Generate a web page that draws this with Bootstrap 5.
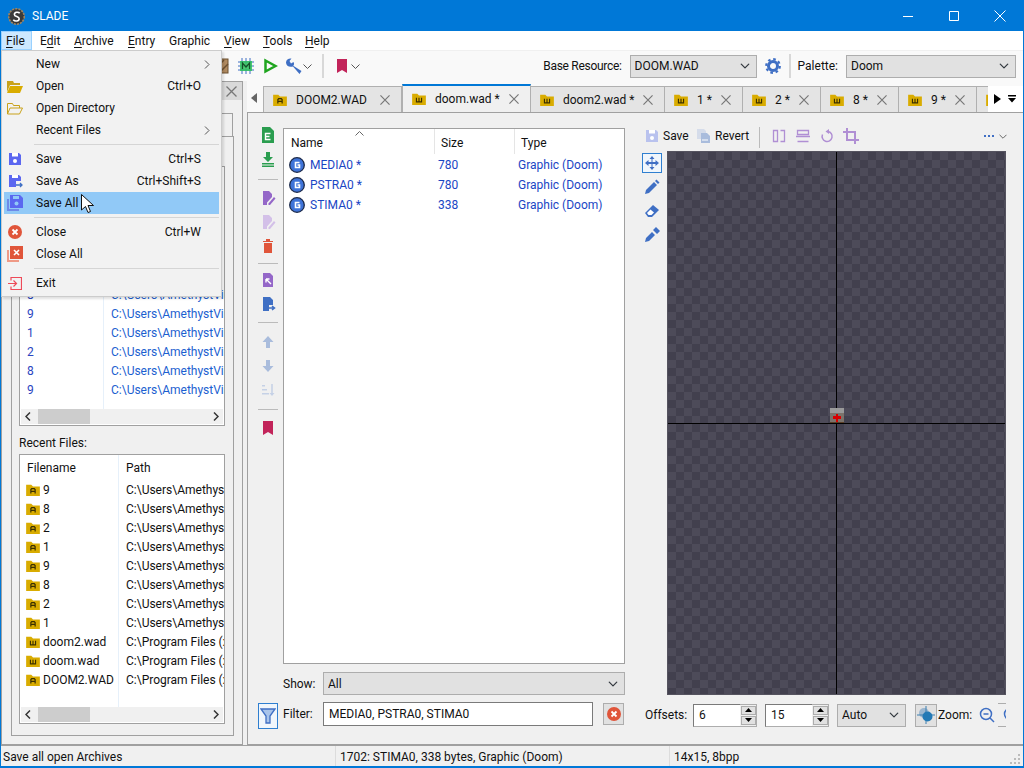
<!DOCTYPE html>
<html lang="en">

<head>
    <meta charset="UTF-8" />
    <meta name="viewport" content="width=device-width, initial-scale=1.0" />
    <title>SLADE</title>

    <link href="https://cdn.jsdelivr.net/npm/bootstrap@5.3.2/dist/css/bootstrap.min.css" rel="stylesheet">

    <style>
        html, body { height: 100%; overflow: hidden; }
        body { font-family: Roboto, "Liberation Sans", sans-serif; font-size: 12px; line-height: 16px; color: #111; background: #f0f0f0; }
        svg { display: block; flex: none; }
        .app-win { width: 1024px; height: 768px; border: 1px solid #0078d7; position: relative; overflow: hidden; }

        /* title + menu */
        .title-bar { height: 30px; background: #0078d7; color: #fff; padding-left: 7px; font-size: 12px; }
        .title-text { margin-left: 7px; }
        .win-btn { width: 46px; height: 30px; display: flex; align-items: center; justify-content: center; }
        .menu-bar { height: 19px; background: #fff; }
        .menu-bar .top-item { padding: 0 5px; line-height: 20px; color: #111; text-decoration: none; flex: none; }
        .menu-bar .top-item.is-open { background: #cce8ff; border: 1px solid #99d1ff; line-height: 18px; width: 31px; margin-right: 3px; padding: 0 4px; }
        .menu-bar .top-item u { text-underline-offset: 2px; }
        .menu-bar .top-item:nth-child(2) { width: 34px; }
        .menu-bar .top-item:nth-child(3) { width: 54px; }
        .menu-bar .top-item:nth-child(4) { width: 41px; }
        .menu-bar .top-item:nth-child(5) { width: 55px; }
        .menu-bar .top-item:nth-child(6) { width: 39px; }
        .menu-bar .top-item:nth-child(7) { width: 42px; }

        /* main toolbar */
        .tool-bar { height: 31px; background: #f9f9f9; border-top: 1px solid #f0f0f0; padding-left: 213px; padding-right: 7px; }
        .tool-sep { width: 2px; height: 24px; background: #d8d8d8; flex: none; }
        .gap-1px { margin-left: 1px; }
        .gap-10 { margin-left: 10px; }
        .base-label { letter-spacing: -.3px; }
        .plain-select { height: 23px; border: 1px solid #adadad; border-radius: 0; background-color: #e1e1e1; font-size: 12px; line-height: 16px; color: #111; padding: 0 3px 0 4px; background-position: right 5px center; background-size: 12px 10px; box-shadow: none; }
        .base-select { width: 127px; }
        .palette-select { width: 170px; }
        .palette-sep { margin-right: 7px; }

        /* left panel */
        .left-col { width: 242px; height: 664px; border: 1px solid #a0a0a0; border-top: 0; flex: none; }
        .dock-head { height: 19px; background: #d9d9d9; padding-right: 5px; border-top: 1px solid #a0a0a0; }
        .dock-tab { height: 23px; margin: 13px 0 0 9px; width: 222px; border: 1px solid #a0a0a0; border-bottom: 0; background: #f0f0f0; }
        .dock-page { margin: 0 9px; width: 223px; height: 600px; border: 1px solid #a0a0a0; padding: 29px 8px 9px 7px; }
        .file-frame { background: #fff; border: 1px solid #a0a0a0; overflow: hidden; position: relative; }
        .file-frame .file-row { height: 19px; display: flex; align-items: center; white-space: nowrap; }
        .file-frame .cell-a { overflow: hidden; flex: none; padding-left: 7px; display: flex; align-items: center; gap: 3px; }
        .file-frame .cell-b { overflow: hidden; flex: none; padding-left: 7px; }
        .frame-top { height: 260px; }
        .frame-top .cell-a { width: 84px; }
        .frame-top .cell-b { width: 120px; }
        .frame-bottom { height: 270px; }
        .frame-bottom .cell-a { width: 99px; padding-left: 6px; }
        .frame-bottom .cell-b { width: 105px; }
        .frame-bottom .list-head .cell-a { padding-left: 7px; }
        .col-rule { position: absolute; top: 0; bottom: 15px; width: 1px; background: #e6f0fa; }
        .rule-top { left: 83px; }
        .rule-bottom { left: 98px; }
        .hidden-rows { height: 118px; }
        .is-mod { color: #1c5fd0; }
        .is-mod .cell-a { color: #2a45c0; }
        .list-head { height: 25px; display: flex; align-items: center; }
        .h-scroll { position: absolute; left: 1px; right: 1px; bottom: 1px; height: 15px; background: #f0f0f0; display: flex; align-items: center; justify-content: space-between; padding: 0 4px; }
        .h-thumb { position: absolute; left: 17px; top: 0; width: 52px; height: 15px; background: #cdcdcd; }
        .recent-label { margin: 9px 0 3px; height: 16px; }

        /* right part */
        .right-col { width: 776px; height: 664px; margin-left: 4px; flex: none; }
        .tab-strip { height: 31px; background: #f9f9f9; padding-left: 16px; position: relative; overflow: hidden; }
        .tab-strip .nav { flex-wrap: nowrap; border: 0; width: 760px; overflow: hidden; align-items: flex-end; height: 31px; }
        .tab-back { position: absolute; left: 4px; top: 12px; }
        .doc-tab { height: 26px; flex: none; background: #e4e4e4; border: 1px solid #b0b0b0; border-bottom: 0; border-left-width: 0; padding-left: 9px; display: flex; align-items: center; color: #111; gap: 9px; text-decoration: none; white-space: nowrap; }
        .doc-tab:first-child { border-left-width: 1px; }
        .doc-tab.is-on { height: 29px; background: #f0f0f0; border-top: 2px solid #0078d7; border-left: 1px solid #b0b0b0; margin-bottom: -1px; padding-top: 1px; padding-bottom: 2px; }
        .doc-tab .x-close { margin-left: auto; margin-right: 11px; }
        .w-137 { width: 139px; } .w-128 { width: 129px; } .w-134 { width: 134px; } .w-78 { width: 78px; } .w-12 { width: 20px; }
        .strip-end { position: absolute; right: 0; top: 5px; bottom: 0; width: 35px; background: #fff; display: flex; align-items: center; padding-left: 6px; gap: 7px; }
        .main-pane { height: 633px; background: #f0f0f0; border: 1px solid #a0a0a0; border-right: 0; padding: 15px 0 0 10px; }
        .entry-col { width: 367px; flex: none; }
        .v-tools { width: 20px; flex: none; margin-top: -1px; }
        .v-tools svg { margin: 0 auto 8px; }
        .v-sep { width: 20px; height: 1px; background: #bbb; }
        .sep-1 { margin: 12px 0 10px; }
        .sep-2 { margin: 9px 0 8px; }
        .sep-3 { margin: 10px 0 11px; }
        .sep-4 { margin: 11px 0 10px; }
        .entry-list { width: 342px; height: 536px; margin-left: 5px; background: #fff; border: 1px solid #a0a0a0; position: relative; }
        .entry-list .list-head { height: 26px; position: relative; padding-top: 2px; }
        .entry-list .ent-row { height: 20px; display: flex; align-items: center; color: #1a46c4; }
        .entry-list .list-head > div { padding-left: 7px; }
        .sort-mark { position: absolute; left: 71px; top: 2px; }
        .ent-a { width: 150px; padding-left: 5px; display: flex; gap: 5px; align-items: center; flex: none; }
        .ent-b { width: 80px; padding-left: 4px; flex: none; }
        .ent-c { padding-left: 4px; flex: none; }
        .head-rule { position: absolute; top: 0; height: 25px; width: 1px; background: #e5e5e5; }
        .rule-size { left: 150px; }
        .rule-type { left: 230px; }
        .form-row-a { height: 23px; margin: 8px 0 0 25px; width: 342px; }
        .form-row-b { height: 27px; margin-top: 7px; }
        .field-label { width: 40px; flex: none; }
        .filter-label { margin-left: 5px; margin-top: 4px; }
        .flat-input { height: 24px; border: 1px solid #7a7a7a; border-radius: 0; font-size: 12px; line-height: 16px; padding: 0 5px; color: #111; box-shadow: none; }
        .filter-input { width: 270px; }
        .icon-btn { border-radius: 0; padding: 0; display: flex; align-items: center; justify-content: center; }
        .is-boxed { border: 1px solid #2f7fd0; background: #f0f6fc; }
        .is-grey { border: 1px solid #adadad; background: #e1e1e1; }
        .funnel-btn { width: 20px; height: 26px; margin-top: 1px; }
        .clear-btn { width: 21px; height: 22px; margin: 1px 0 0 10px; }
        .gfx-col { margin-left: 16px; width: 365px; flex: none; }
        .gfx-bar { height: 23px; padding-left: 3px; }
        .save-label { width: 33px; margin-left: 3px; flex: none; }
        .revert-label { width: 44px; margin-left: 3px; flex: none; }
        .gfx-sep { height: 21px; width: 1px; background: #bbb; margin-top: -1px; flex: none; }
        .after-sep { margin-left: 11px; }
        .more-dots { margin-top: 7px; }
        .more-arrow { margin: 6px -1px 0 5px; }
        .gfx-tools { width: 26px; flex: none; }
        .gfx-tools svg { margin: 0 0 8px 3px; }
        .move-btn { width: 20px; height: 20px; margin: 2px 0 6px 1px; }
        .gfx-tools .move-btn svg { margin: 0; }
        .canvas-box { width: 339px; height: 544px; position: relative; overflow: hidden; border: 1px solid #55535f; background-color: #4d4b59; background-image: conic-gradient(#42404e 25%, transparent 0 50%, #42404e 0 75%, transparent 0); background-size: 16px 16px; }
        .cross-v { position: absolute; left: 168px; top: 0; bottom: 0; width: 1px; background: #000; }
        .cross-h { position: absolute; top: 271px; left: 0; right: 0; height: 1px; background: #000; }
        .the-sprite { position: absolute; left: 162px; top: 256px; }
        .spin-wrap { width: 64px; height: 23px; flex: none; border: 1px solid #adadad; }
        .spin-wrap input { width: 47px; height: 23px; margin: -1px 0 0 -1px; border: 1px solid #7a7a7a; border-right: 0; border-bottom-color: #adadad; padding: 0 5px; font-size: 12px; color: #111; border-radius: 0; }
        .spin-btns { width: 15px; margin-left: 1px; display: flex; flex-direction: column; gap: 1px; padding-top: 1px; }
        .spin-btns span { height: 9px; background: #e1e1e1; border: 1px solid #adadad; display: flex; align-items: center; justify-content: center; }
        .offset-row { height: 24px; margin-top: 8px; width: 365px; overflow: hidden; padding-left: 4px; }
        .offset-label { width: 48px; flex: none; }
        .gap-8 { margin-left: 8px; }
        .auto-select { width: 69px; margin-left: 8px; flex: none; }
        .center-btn { width: 22px; height: 23px; margin-left: 9px; flex: none; }
        .zoom-label { margin-left: 1px; flex: none; }
        .zoom-out { margin-left: 7px; }
        .zoom-clip { margin-left: 3px; width: 9px; height: 24px; border-top: 1px solid #adadad; border-bottom: 1px solid #adadad; overflow: hidden; padding: 3px 0 0 5px; flex: none; }

        /* status bar */
        .status-bar { height: 22px; background: #f0f0f0; border-top: 1px solid #a0a0a0; border-bottom: 1px solid #0078d7; }
        .status-bar > div { height: 20px; line-height: 23px; border-right: 1px solid #dcdcdc; padding-left: 2px; white-space: nowrap; }
        .status-bar .status-cell-a { width: 335px; }
        .status-bar .status-cell-b { width: 334px; padding-left: 4px; }
        .status-bar .status-cell-c { flex: 1; border-right: 0; padding-left: 4px; position: relative; }
        .grip { position: absolute; right: 2px; bottom: 1px; }

        /* file menu */
        .file-menu { position: absolute; left: 0; top: 49px; width: 221px; height: 247px; background: #f2f2f2; border: 1px solid #ccc; border-radius: 0; box-shadow: 2px 2px 2px rgba(0,0,0,.12); padding: 2px 2px 2px; display: block; font-size: 12px; margin: 0; min-width: 0; }
        .file-menu .dropdown-item { height: 22px; padding: 0 18px 0 3px; display: flex; align-items: center; color: #111; font-size: 12px; width: 215px; }
        .file-menu .dropdown-item.active { background: #91c9f7; color: #111; }
        .m-ico { width: 16px; margin-right: 13px; flex: none; display: flex; justify-content: center; }
        .m-key { margin-left: auto; }
        .m-arrow { margin-left: auto; margin-right: -9px; }
        .file-menu .dropdown-divider { margin: 3px 0 3px 30px; height: 1px; border-top: 1px solid #d5d5d5; opacity: 1; }
        .mouse-ptr { position: absolute; left: 80px; top: 193px; z-index: 1001; }
    </style>
</head>

<body>
    <svg width="0" height="0" class="position-absolute">
        <defs>
            <symbol id="i-wad" viewBox="0 0 16 14"><path d="M0 1h6l2 2h8v11H0z" fill="#d9ac00"/><path d="M5 5.500v4.800h6V5.500M8 5.500v4.800" fill="none" stroke="#3b3000" stroke-width="1.300"/></symbol>
            <symbol id="i-arc" viewBox="0 0 16 14"><path d="M0 1h6l2 2h8v11H0z" fill="#d9ac00"/><path d="M5.500 11V6.500l1-1h3l1 1V11M5.500 8.500h5" fill="none" stroke="#3b3000" stroke-width="1.400"/></symbol>
            <symbol id="i-gfx" viewBox="0 0 16 16"><circle cx="8" cy="8" r="7.300" fill="#3f74d8" stroke="#1c2a4a" stroke-width="1.300"/><path d="M10.500 5.500H6.500v5h4V8H8.500" fill="none" stroke="#fff" stroke-width="1.600"/></symbol>
            <symbol id="i-x" viewBox="0 0 11 11"><path d="M.5.500l10 10M10.500.500l-10 10" stroke="#777" stroke-width="1.300"/></symbol>
            <symbol id="i-down" viewBox="0 0 9 5"><path d="M.5.500l4 4 4-4" fill="none" stroke="#555"/></symbol>
            <symbol id="i-save" viewBox="0 0 16 16"><path d="M2 2h10l2 2v10H2z" fill="currentColor"/><path d="M5 2h6v3.500H5z" fill="#fff"/><circle cx="8" cy="10" r="2" fill="#fff"/></symbol>
            <symbol id="i-book" viewBox="0 0 16 16"><path d="M3 1h10v14l-5-3-5 3z" fill="#c2245a"/></symbol>
            <symbol id="i-edit" viewBox="0 0 16 16"><path d="M3 1h6l3 3v3l-5 5.500V15H3z" fill="currentColor"/><path d="M8.500 13.500l5.500-6.500 1.500 1.500-5.500 6.500H8.500z" fill="currentColor"/></symbol>
            <symbol id="i-scroll-l" viewBox="0 0 6 9"><path d="M5 .5l-4 4 4 4" fill="none" stroke="#333" stroke-width="1.500"/></symbol>
            <symbol id="i-scroll-r" viewBox="0 0 6 9"><path d="M1 .5l4 4-4 4" fill="none" stroke="#333" stroke-width="1.500"/></symbol>
            <symbol id="i-spin-up" viewBox="0 0 7 4"><path d="M3.500 0L7 4H0z" fill="#000"/></symbol>
            <symbol id="i-spin-dn" viewBox="0 0 7 4"><path d="M0 0h7L3.500 4z" fill="#000"/></symbol>
        </defs>
    </svg>

    <div class="app-win">

        <!-- title -->
        <div class="title-bar d-flex align-items-center">
            <svg width="17" height="17" viewBox="0 0 16 16"><circle cx="8" cy="8" r="7.300" fill="#3a3a3a" stroke="#a08560" stroke-width="1.500" stroke-dasharray="2 1"/><path d="M11 5C10 3.500 6 3.500 6 6c0 2.500 4.500 1.500 4.500 4S6.500 13 5 11" fill="none" stroke="#fff" stroke-width="1.500"/></svg>
            <span class="title-text">SLADE</span>
            <div class="win-btn ms-auto"><svg width="10" height="1"><path d="M0 .5h10" stroke="#fff"/></svg></div>
            <div class="win-btn"><svg width="10" height="10"><path d="M.5.500h9v9h-9z" fill="none" stroke="#fff"/></svg></div>
            <div class="win-btn"><svg width="12" height="12"><path d="M.5.500l11 11M11.500.500l-11 11" stroke="#fff"/></svg></div>
        </div>

        <!-- menu -->
        <div class="menu-bar d-flex">
            <a class="top-item is-open" href="#"><u>F</u>ile</a>
            <a class="top-item" href="#">E<u>d</u>it</a>
            <a class="top-item" href="#"><u>A</u>rchive</a>
            <a class="top-item" href="#"><u>E</u>ntry</a>
            <a class="top-item" href="#">Graphic</a>
            <a class="top-item" href="#"><u>V</u>iew</a>
            <a class="top-item" href="#"><u>T</u>ools</a>
            <a class="top-item" href="#"><u>H</u>elp</a>
        </div>

        <!-- toolbar -->
        <div class="tool-bar d-flex align-items-center">
            <svg width="16" height="16" viewBox="0 0 16 16"><rect x="2" y="1" width="12" height="14" fill="#b08a60" stroke="#6d5030"/><path d="M3 9l7-7M6 14l8-8" stroke="#6d5030" stroke-width="1.500"/></svg>
            <svg class="ms-2" width="16" height="16" viewBox="0 0 16 16"><path d="M0 4h16M0 8h16M0 12h16M4 0v16M8 0v16M12 0v16" stroke="#3f6fc4"/><rect x="2" y="3" width="12" height="10" fill="#2fc35a" opacity=".85"/><path d="M4.500 11V5L8 9l3.500-4v6" fill="none" stroke="#174f28" stroke-width="1.200"/></svg>
            <svg class="ms-2" width="16" height="16" viewBox="0 0 16 16"><path d="M3.500 2.500v11l10-5.500z" fill="none" stroke="#1fa51f" stroke-width="2.500"/></svg>
            <svg class="ms-2" width="16" height="16" viewBox="0 0 16 16"><path d="M0 4.500C0 1.500 3 0 5.500.500L3.500 3 5 5.500l2.500-1.500C8.500 6 8 7 7.200 7.800L15.500 13l-2 3-6.500-7.500C3.500 9.500 0 8 0 4.500z" fill="#3f6fc4"/></svg>
            <svg class="gap-1px" width="9" height="5"><use href="#i-down"/></svg>
            <div class="tool-sep gap-10"></div>
            <svg class="gap-10" width="16" height="16"><use href="#i-book"/></svg>
            <svg class="gap-1px" width="9" height="5"><use href="#i-down"/></svg>

            <span class="ms-auto me-2 base-label">Base Resource:</span>
            <select class="form-select plain-select base-select"><option>DOOM.WAD</option></select>
            <svg class="mx-2" width="16" height="16" viewBox="0 0 16 16"><circle cx="8" cy="8" r="4.500" fill="none" stroke="#3f6fc4" stroke-width="3"/><circle cx="8" cy="8" r="6.800" fill="none" stroke="#3f6fc4" stroke-width="2.200" stroke-dasharray="2.600 2.740"/></svg>
            <div class="tool-sep palette-sep"></div>
            <span class="me-2">Palette:</span>
            <select class="form-select plain-select palette-select"><option>Doom</option></select>
        </div>

        <div class="d-flex">
            <!-- left panel -->
            <div class="left-col">
                <div class="dock-head d-flex align-items-center justify-content-end"><svg width="11" height="11"><use href="#i-x"/></svg></div>
                <div class="dock-tab"></div>
                <div class="dock-page">
                    <div class="file-frame frame-top">
                        <div class="col-rule rule-top"></div>
                        <div class="hidden-rows"></div>
                        <div class="file-row is-mod"><div class="cell-a">8</div><div class="cell-b">C:\Users\AmethystViper</div></div>
                        <div class="file-row is-mod"><div class="cell-a">9</div><div class="cell-b">C:\Users\AmethystViper</div></div>
                        <div class="file-row is-mod"><div class="cell-a">1</div><div class="cell-b">C:\Users\AmethystViper</div></div>
                        <div class="file-row is-mod"><div class="cell-a">2</div><div class="cell-b">C:\Users\AmethystViper</div></div>
                        <div class="file-row is-mod"><div class="cell-a">8</div><div class="cell-b">C:\Users\AmethystViper</div></div>
                        <div class="file-row is-mod"><div class="cell-a">9</div><div class="cell-b">C:\Users\AmethystViper</div></div>
                        <div class="h-scroll">
                            <svg width="6" height="9"><use href="#i-scroll-l"/></svg>
                            <div class="h-thumb"></div>
                            <svg width="6" height="9"><use href="#i-scroll-r"/></svg>
                        </div>
                    </div>
                    <div class="recent-label">Recent Files:</div>
                    <div class="file-frame frame-bottom">
                        <div class="col-rule rule-bottom"></div>
                        <div class="list-head"><div class="cell-a">Filename</div><div class="cell-b">Path</div></div>
                        <div class="file-row"><div class="cell-a"><svg width="14" height="12"><use href="#i-arc"/></svg>9</div><div class="cell-b">C:\Users\AmethystViper</div></div>
                        <div class="file-row"><div class="cell-a"><svg width="14" height="12"><use href="#i-arc"/></svg>8</div><div class="cell-b">C:\Users\AmethystViper</div></div>
                        <div class="file-row"><div class="cell-a"><svg width="14" height="12"><use href="#i-arc"/></svg>2</div><div class="cell-b">C:\Users\AmethystViper</div></div>
                        <div class="file-row"><div class="cell-a"><svg width="14" height="12"><use href="#i-arc"/></svg>1</div><div class="cell-b">C:\Users\AmethystViper</div></div>
                        <div class="file-row"><div class="cell-a"><svg width="14" height="12"><use href="#i-arc"/></svg>9</div><div class="cell-b">C:\Users\AmethystViper</div></div>
                        <div class="file-row"><div class="cell-a"><svg width="14" height="12"><use href="#i-arc"/></svg>8</div><div class="cell-b">C:\Users\AmethystViper</div></div>
                        <div class="file-row"><div class="cell-a"><svg width="14" height="12"><use href="#i-arc"/></svg>2</div><div class="cell-b">C:\Users\AmethystViper</div></div>
                        <div class="file-row"><div class="cell-a"><svg width="14" height="12"><use href="#i-arc"/></svg>1</div><div class="cell-b">C:\Users\AmethystViper</div></div>
                        <div class="file-row"><div class="cell-a"><svg width="14" height="12"><use href="#i-wad"/></svg>doom2.wad</div><div class="cell-b">C:\Program Files (x86)</div></div>
                        <div class="file-row"><div class="cell-a"><svg width="14" height="12"><use href="#i-wad"/></svg>doom.wad</div><div class="cell-b">C:\Program Files (x86)</div></div>
                        <div class="file-row"><div class="cell-a"><svg width="14" height="12"><use href="#i-arc"/></svg>DOOM2.WAD</div><div class="cell-b">C:\Program Files (x86)</div></div>
                        <div class="h-scroll">
                            <svg width="6" height="9"><use href="#i-scroll-l"/></svg>
                            <div class="h-thumb"></div>
                            <svg width="6" height="9"><use href="#i-scroll-r"/></svg>
                        </div>
                    </div>
                </div>
            </div>

            <!-- right -->
            <div class="right-col">
                <div class="tab-strip">
                    <svg class="tab-back" width="6" height="10" viewBox="0 0 6 10"><path d="M6 0v10L0 5z" fill="#666"/></svg>
                    <nav class="nav nav-tabs">
                        <a class="doc-tab w-137" href="#"><svg width="14" height="12"><use href="#i-arc"/></svg>DOOM2.WAD<svg class="x-close" width="10" height="10"><use href="#i-x"/></svg></a>
                        <a class="doc-tab is-on w-128" href="#"><svg width="14" height="12"><use href="#i-wad"/></svg>doom.wad *<svg class="x-close" width="10" height="10"><use href="#i-x"/></svg></a>
                        <a class="doc-tab w-134" href="#"><svg width="14" height="12"><use href="#i-wad"/></svg>doom2.wad *<svg class="x-close" width="10" height="10"><use href="#i-x"/></svg></a>
                        <a class="doc-tab w-78" href="#"><svg width="14" height="12"><use href="#i-wad"/></svg>1 *<svg class="x-close" width="10" height="10"><use href="#i-x"/></svg></a>
                        <a class="doc-tab w-78" href="#"><svg width="14" height="12"><use href="#i-wad"/></svg>2 *<svg class="x-close" width="10" height="10"><use href="#i-x"/></svg></a>
                        <a class="doc-tab w-78" href="#"><svg width="14" height="12"><use href="#i-wad"/></svg>8 *<svg class="x-close" width="10" height="10"><use href="#i-x"/></svg></a>
                        <a class="doc-tab w-78" href="#"><svg width="14" height="12"><use href="#i-wad"/></svg>9 *<svg class="x-close" width="10" height="10"><use href="#i-x"/></svg></a>
                        <a class="doc-tab w-12" href="#"><svg width="14" height="12"><use href="#i-wad"/></svg></a>
                    </nav>
                    <div class="strip-end">
                        <svg width="7" height="10" viewBox="0 0 7 10"><path d="M0 0v10l7-5z" fill="#000"/></svg>
                        <svg width="8" height="8" viewBox="0 0 8 8"><path d="M0 0h8v1.500H0zM0 3h8L4 7.500z" fill="#000"/></svg>
                    </div>
                </div>

                <div class="main-pane d-flex">
                    <!-- entry list column -->
                    <div class="entry-col">
                        <div class="d-flex">
                            <div class="v-tools">
                                <svg width="16" height="16" viewBox="0 0 16 16"><path d="M2 0h8l4 4v12H2z" fill="#2a9d4f"/><path d="M10.500 6.500h-5v6h5M5.500 9.500h4" fill="none" stroke="#fff" stroke-width="1.400"/></svg>
                                <svg width="16" height="16" viewBox="0 0 16 16"><path d="M6 1h4v5h3l-5 5-5-5h3zM2 12h12v1.500H2zM2 14.500h12V16H2z" fill="#2a9d4f"/></svg>
                                <div class="v-sep sep-1"></div>
                                <svg width="16" height="16" style="color:#9467c8"><use href="#i-edit"/></svg>
                                <svg width="16" height="16" style="color:#d3c0e8"><use href="#i-edit"/></svg>
                                <svg width="16" height="16" viewBox="0 0 16 16"><path d="M3 3h10v1H3zM6 1h4v2H6zM4 5h8v10H4z" fill="#e0553a"/></svg>
                                <div class="v-sep sep-2"></div>
                                <svg width="16" height="16" viewBox="0 0 16 16"><path d="M3 1h7l3 3v11H3z" fill="#9467c8"/><path d="M6 7l5 5M6 7v3.500M6 7h3.500" stroke="#fff" stroke-width="1.400" fill="none"/></svg>
                                <svg width="16" height="16" viewBox="0 0 16 16"><path d="M3 1h7l3 3v5H9v6H3z" fill="#3f6fc4"/><path d="M9 12h5M12 10l2.500 2-2.500 2" stroke="#3f6fc4" stroke-width="1.500" fill="none"/></svg>
                                <div class="v-sep sep-3"></div>
                                <svg width="16" height="16" viewBox="0 0 16 16"><path d="M8 2l5.500 6H10v6H6V8H2.500z" fill="#a9bcdc"/></svg>
                                <svg width="16" height="16" viewBox="0 0 16 16"><path d="M8 14L2.500 8H6V2h4v6h3.500z" fill="#a9bcdc"/></svg>
                                <svg width="16" height="16" viewBox="0 0 16 16"><path d="M2 3h3v1.500H2zM2 7h5v1.500H2zM2 11h7v1.500H2zM9.500 11l2.500 3 2.500-3z" fill="#c5d1e6"/><path d="M12 2v11" stroke="#c5d1e6" stroke-width="1.500"/></svg>
                                <div class="v-sep sep-4"></div>
                                <svg width="16" height="16"><use href="#i-book"/></svg>
                            </div>
                            <div class="entry-list">
                                <svg class="sort-mark" width="9" height="5" viewBox="0 0 9 5"><path d="M.5 4.500l4-4 4 4" fill="none" stroke="#666"/></svg>
                                <div class="head-rule rule-size"></div>
                                <div class="head-rule rule-type"></div>
                                <div class="list-head"><div class="ent-a">Name</div><div class="ent-b">Size</div><div class="ent-c">Type</div></div>
                                <div class="ent-row"><div class="ent-a"><svg width="16" height="16"><use href="#i-gfx"/></svg>MEDIA0 *</div><div class="ent-b">780</div><div class="ent-c">Graphic (Doom)</div></div>
                                <div class="ent-row"><div class="ent-a"><svg width="16" height="16"><use href="#i-gfx"/></svg>PSTRA0 *</div><div class="ent-b">780</div><div class="ent-c">Graphic (Doom)</div></div>
                                <div class="ent-row"><div class="ent-a"><svg width="16" height="16"><use href="#i-gfx"/></svg>STIMA0 *</div><div class="ent-b">338</div><div class="ent-c">Graphic (Doom)</div></div>
                            </div>
                        </div>
                        <div class="form-row-a d-flex align-items-center">
                            <div class="field-label">Show:</div>
                            <select class="form-select plain-select flex-fill"><option>All</option></select>
                        </div>
                        <div class="form-row-b d-flex align-items-start">
                            <div class="icon-btn is-boxed funnel-btn">
                                <svg width="16" height="16" viewBox="0 0 16 16"><path d="M1 1h14L10 8v7H6V8z" fill="#a9c4ea" stroke="#3f6fc4" stroke-width="1.300"/></svg>
                            </div>
                            <div class="field-label filter-label">Filter:</div>
                            <input class="form-control flat-input filter-input" value="MEDIA0, PSTRA0, STIMA0">
                            <div class="icon-btn is-grey clear-btn">
                                <svg width="14" height="14" viewBox="0 0 14 14"><circle cx="7" cy="7" r="7" fill="#e0553a"/><path d="M4.500 4.500l5 5M9.500 4.500l-5 5" stroke="#fff" stroke-width="1.800"/></svg>
                            </div>
                        </div>
                    </div>

                    <!-- graphic column -->
                    <div class="gfx-col">
                        <div class="gfx-bar d-flex align-items-start">
                            <svg width="16" height="16" style="color:#b9c2ee"><use href="#i-save"/></svg>
                            <span class="save-label">Save</span>
                            <svg width="16" height="16" viewBox="0 0 16 16"><path d="M1 1h7l2 2v8H1z" fill="#d5dcea"/><path d="M5 5h6l3 3v7H5z" fill="#a9bcdc"/><path d="M6 12h6" stroke="#fff"/></svg>
                            <span class="revert-label">Revert</span>
                            <div class="gfx-sep"></div>
                            <svg class="after-sep" width="16" height="16" viewBox="0 0 16 16"><path d="M2.500 2.500h4v11h-4zM9.500 2.500h4v11h-4" fill="none" stroke="#b08fd4" stroke-width="1.300"/></svg>
                            <svg class="ms-2" width="16" height="16" viewBox="0 0 16 16"><path d="M2.500 2.500h11v4h-11zM2.500 13.500h11M1 8.500h14" fill="none" stroke="#b08fd4" stroke-width="1.300"/></svg>
                            <svg class="ms-2" width="16" height="16" viewBox="0 0 16 16"><path d="M9 3.500a5 5 0 1 1-5.500 3" fill="none" stroke="#b08fd4" stroke-width="1.500"/><path d="M10 1v5L6.500 3.500z" fill="#b08fd4"/></svg>
                            <svg class="ms-2" width="16" height="16" viewBox="0 0 16 16"><path d="M4 0v12h12M0 4h12v12" fill="none" stroke="#b08fd4" stroke-width="2"/></svg>
                            <svg class="ms-auto more-dots" width="10" height="2"><path d="M0 0h2v2H0zM4 0h2v2H4zM8 0h2v2H8z" fill="#3f6fc4"/></svg>
                            <svg class="more-arrow" width="8" height="5" viewBox="0 0 9 5"><use href="#i-down"/></svg>
                        </div>
                        <div class="d-flex">
                            <div class="gfx-tools">
                                <div class="icon-btn is-boxed move-btn">
                                    <svg width="14" height="14" viewBox="0 0 14 14"><path d="M7 0l2.500 3h-2v3h3V4L14 7l-3.500 3V8h-3v3h2L7 14l-2.500-3h2V8h-3v2L0 7l3.500-3v2h3V3h-2z" fill="#3f6fc4"/></svg>
                                </div>
                                <svg width="16" height="16" viewBox="0 0 16 16"><path d="M2 11l8-8 3 3-8 8-4 1zM11 2l1.500-1.500 3 3L14 5z" fill="#3f6fc4"/></svg>
                                <svg width="16" height="16" viewBox="0 0 16 16"><path d="M1 10l8-8 6 5-7 7H4z" fill="#3f6fc4"/><path d="M3 10l3.500-3.500 3.500 3L7.500 12H4.500z" fill="#fff"/></svg>
                                <svg width="16" height="16" viewBox="0 0 16 16"><path d="M1 15l1-4 6-6 3 3-6 6zM9 3l3-3 4 4-3 3z" fill="#3f6fc4"/></svg>
                            </div>
                            <div class="canvas-box">
                                <div class="cross-v"></div>
                                <div class="cross-h"></div>
                                <svg class="the-sprite" width="14" height="15" viewBox="0 0 14 15"><rect width="14" height="15" fill="#7b736b"/><rect width="14" height="5" fill="#9a9a9a"/><rect x="6" y="6" width="2" height="8" fill="#d80000"/><rect x="3" y="8" width="8" height="3" fill="#d80000"/><rect y="14" width="14" height="1" fill="#5b3f27"/></svg>
                            </div>
                        </div>
                        <div class="offset-row d-flex align-items-center">
                            <span class="offset-label">Offsets:</span>
                            <div class="spin-wrap d-flex"><input class="form-control" value="6"><div class="spin-btns"><span><svg width="7" height="4"><use href="#i-spin-up"/></svg></span><span><svg width="7" height="4"><use href="#i-spin-dn"/></svg></span></div></div>
                            <div class="spin-wrap d-flex gap-8"><input class="form-control" value="15"><div class="spin-btns"><span><svg width="7" height="4"><use href="#i-spin-up"/></svg></span><span><svg width="7" height="4"><use href="#i-spin-dn"/></svg></span></div></div>
                            <select class="form-select plain-select auto-select"><option>Auto</option></select>
                            <div class="icon-btn is-grey center-btn">
                                <svg width="18" height="18" viewBox="0 0 18 18"><circle cx="7" cy="7" r="5" fill="#9bb6cf"/><path d="M9 0v18M0 9h18" stroke="#3a7fb0"/><circle cx="10.500" cy="10.500" r="5" fill="#2379b5"/></svg>
                            </div>
                            <span class="zoom-label">Zoom:</span>
                            <svg class="zoom-out" width="16" height="16" viewBox="0 0 16 16"><circle cx="7" cy="7" r="5.500" fill="none" stroke="#3f6fc4" stroke-width="1.500"/><path d="M4.500 7h5M11 11l4 4" stroke="#3f6fc4" stroke-width="1.500"/></svg>
                            <div class="zoom-clip"><svg width="10" height="16" viewBox="0 0 10 16"><circle cx="7" cy="7" r="5.500" fill="none" stroke="#3f6fc4" stroke-width="1.500"/></svg></div>
                        </div>
                    </div>
                </div>
            </div>
        </div>

        <!-- status -->
        <div class="status-bar d-flex">
            <div class="status-cell-a">Save all open Archives</div>
            <div class="status-cell-b">1702: STIMA0, 338 bytes, Graphic (Doom)</div>
            <div class="status-cell-c">14x15, 8bpp
                <svg class="grip" width="11" height="11" viewBox="0 0 11 11"><path d="M8 0h2v2H8zM4 4h2v2H4zM8 4h2v2H8zM0 8h2v2H0zM4 8h2v2H4zM8 8h2v2H8z" fill="#bbb"/></svg>
            </div>
        </div>

        <!-- File menu -->
        <div class="dropdown-menu file-menu show">
            <a class="dropdown-item" href="#"><span class="m-ico"></span>New<svg class="m-arrow" width="6" height="9" viewBox="0 0 6 9"><path d="M1 .5l4 4-4 4" fill="none" stroke="#555"/></svg></a>
            <a class="dropdown-item" href="#"><span class="m-ico"><svg width="16" height="13" viewBox="0 0 16 13"><path d="M0 1h6l1 2h6v2H3L0 12z" fill="#c9a21a"/><path d="M3 6h13l-3 7H0z" fill="#d9ac00"/></svg></span>Open<span class="m-key">Ctrl+O</span></a>
            <a class="dropdown-item" href="#"><span class="m-ico"><svg width="16" height="13" viewBox="0 0 16 13"><path d="M.5 12V1.500h5l1 2h6V6M.5 12L3 6h12.500l-3 6z" fill="none" stroke="#c9a21a"/></svg></span>Open Directory</a>
            <a class="dropdown-item" href="#"><span class="m-ico"></span>Recent Files<svg class="m-arrow" width="6" height="9" viewBox="0 0 6 9"><path d="M1 .5l4 4-4 4" fill="none" stroke="#555"/></svg></a>
            <div class="dropdown-divider"></div>
            <a class="dropdown-item" href="#"><span class="m-ico"><svg width="16" height="16" style="color:#5b67f0"><use href="#i-save"/></svg></span>Save<span class="m-key">Ctrl+S</span></a>
            <a class="dropdown-item" href="#"><span class="m-ico"><svg width="16" height="16" viewBox="0 0 16 16"><path d="M2 2h10l2 2v4H9v6H2z" fill="#5b67f0"/><path d="M5 2h6v3H5z" fill="#fff"/><path d="M9 12h6M13 10l2 2-2 2" stroke="#3f6fc4" stroke-width="1.300" fill="none"/></svg></span>Save As<span class="m-key">Ctrl+Shift+S</span></a>
            <a class="dropdown-item active" href="#"><span class="m-ico"><svg width="16" height="16" viewBox="0 0 16 16"><path d="M0 4h2v10h10v2H0z" fill="#6f8ae8"/><path d="M3 0h10l3 3v10H3z" fill="#5b67f0"/><path d="M6 1h6v3H6z" fill="#91c9f7"/><circle cx="9.500" cy="8.500" r="2" fill="#91c9f7"/></svg></span>Save All</a>
            <div class="dropdown-divider"></div>
            <a class="dropdown-item" href="#"><span class="m-ico"><svg width="14" height="14" viewBox="0 0 14 14"><circle cx="7" cy="7" r="7" fill="#e0553a"/><path d="M4.500 4.500l5 5M9.500 4.500l-5 5" stroke="#fff" stroke-width="1.800"/></svg></span>Close<span class="m-key">Ctrl+W</span></a>
            <a class="dropdown-item" href="#"><span class="m-ico"><svg width="16" height="16" viewBox="0 0 16 16"><path d="M0 4h2v10h10v2H0z" fill="#ef9a86"/><path d="M3 0h13v13H3z" fill="#e0553a"/><path d="M7 4l5 5M12 4L7 9" stroke="#fff" stroke-width="1.600"/></svg></span>Close All</a>
            <div class="dropdown-divider"></div>
            <a class="dropdown-item" href="#"><span class="m-ico"><svg width="14" height="13" viewBox="0 0 14 13"><path d="M3 3.500V.500h10.500v12H3v-3M0 6.500h8M5.500 3.500l3 3-3 3" fill="none" stroke="#ee4a58" stroke-width="1.200"/></svg></span>Exit</a>
        </div>

        <svg class="mouse-ptr" width="13" height="20" viewBox="0 0 13 20"><path d="M.5.500v15.500l4-3.500 2.500 6 2.500-1-2.500-6h5.500z" fill="#fff" stroke="#111"/></svg>
    </div>

    <script src="https://cdn.jsdelivr.net/npm/bootstrap@5.3.2/dist/js/bootstrap.bundle.min.js"></script>
</body>

</html>
